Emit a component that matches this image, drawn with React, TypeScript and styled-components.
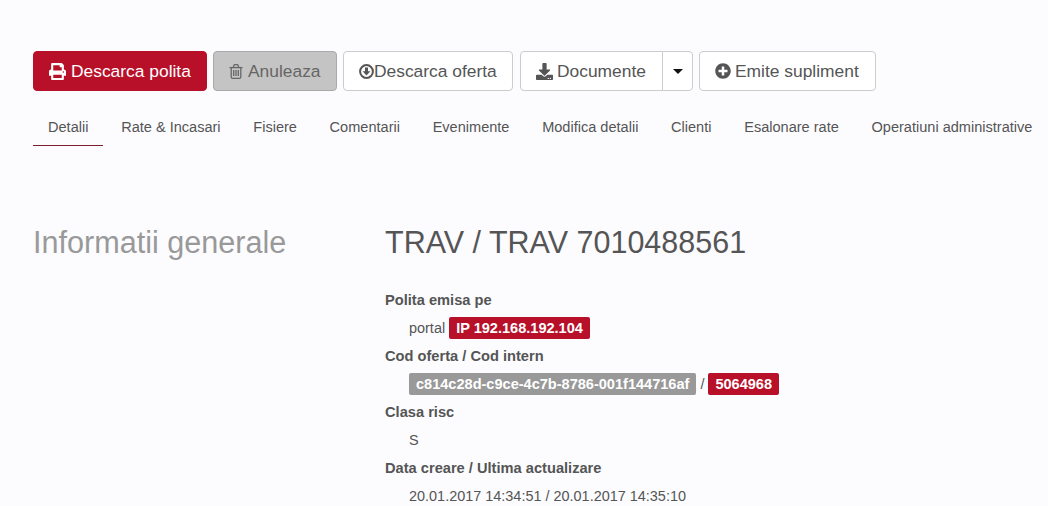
import React from "react";
import styled, { createGlobalStyle } from "styled-components";
import { FaPrint, FaDownload, FaPlusCircle } from "react-icons/fa";

const Global = createGlobalStyle`
  html, body { margin: 0; padding: 0; height: 100%; overflow: hidden; background: #fcfcff; }
  body { font-family: "Liberation Sans", Arial, sans-serif; color: #555; font-size: 14.45px; }
  * { box-sizing: border-box; }
`;

const Page = styled.div`
  padding: 51px 0 0 33px;
  height: 506px;
  overflow: hidden;
`;

const Toolbar = styled.div`
  display: flex;
  gap: 6px;
  height: 40px;
`;

const Button = styled.button<{ $variant?: "primary" | "disabled"; $width: number; $gap?: number }>`
  display: inline-flex;
  align-items: center;
  justify-content: flex-start;
  gap: ${(p) => p.$gap ?? 5}px;
  width: ${(p) => p.$width}px;
  height: 40px;
  padding: 0 0 0 15px;
  font: 17.4px "Liberation Sans", Arial, sans-serif;
  white-space: nowrap;
  border-radius: 4px;
  border: 1px solid
    ${(p) => (p.$variant === "primary" ? "#b81029" : p.$variant === "disabled" ? "#a9a9a9" : "#ccc")};
  background: ${(p) => (p.$variant === "primary" ? "#b81029" : p.$variant === "disabled" ? "#c4c4c4" : "#fff")};
  color: ${(p) => (p.$variant === "primary" ? "#fff" : p.$variant === "disabled" ? "#666" : "#555")};
`;

const SplitGroup = styled.div`
  display: flex;
  margin-left: 1px;
`;

const SplitMain = styled(Button)`
  border-radius: 4px 0 0 4px;
`;

const SplitCaret = styled.button`
  display: inline-flex;
  align-items: center;
  justify-content: center;
  width: 31px;
  height: 40px;
  padding: 0;
  margin-left: -1px;
  background: #fff;
  border: 1px solid #ccc;
  border-radius: 0 4px 4px 0;
  &::after {
    content: "";
    border-top: 5px solid #111;
    border-left: 5px solid transparent;
    border-right: 5px solid transparent;
  }
`;

const Tabs = styled.nav`
  display: flex;
  gap: 2.7px;
  margin-top: 14px;
  height: 41px;
`;

const Tab = styled.a<{ $active?: boolean }>`
  padding: 0 15px;
  height: 41px;
  line-height: 44px;
  font-size: 14.55px;
  color: #555;
  white-space: nowrap;
  border-bottom: 1px solid ${(p) => (p.$active ? "#7a1f2b" : "transparent")};
`;

const Section = styled.section`
  display: grid;
  grid-template-columns: 352px 1fr;
  margin-top: 78px;
`;

const SectionTitle = styled.h2`
  margin: 0;
  font-size: 30.6px;
  font-weight: 400;
  line-height: 36px;
  color: #999;
`;

const PolicyTitle = styled.h1`
  margin: 0 0 26px;
  font-size: 30.5px;
  font-weight: 400;
  line-height: 36px;
  color: #555;
`;

const Details = styled.dl`
  margin: 0;
`;

const Term = styled.dt`
  font-size: 14.65px;
  font-weight: 700;
  line-height: 28px;
  height: 28px;
`;

const Value = styled.dd`
  margin: 0 0 0 24px;
  line-height: 28px;
  height: 28px;
  white-space: nowrap;
`;

const Badge = styled.span<{ $tone: "red" | "gray" }>`
  display: inline-block;
  padding: 0 7px;
  height: 22px;
  font-size: 14.55px;
  line-height: 22px;
  border-radius: 2px;
  font-weight: 700;
  color: #fff;
  vertical-align: middle;
  margin-top: -3px;
  background: ${(p) => (p.$tone === "red" ? "#b81029" : "#999")};
`;

const TrashIcon = () => (
  <svg width="14" height="15" viewBox="0 0 14 15" fill="none" stroke="currentColor" strokeWidth="1.3">
    <path d="M.5 3.6h13" />
    <path d="M4.3 3.4 5 1.2q.2-.5.7-.5h2.6q.5 0 .7.5l.7 2.2" />
    <path d="M2.2 3.6v9.4q0 1.3 1.2 1.3h7.2q1.2 0 1.2-1.3V3.6" />
    <path d="M4.7 6v6M7 6v6M9.3 6v6" />
  </svg>
);

const CircleDownIcon = () => (
  <svg width="15" height="15" viewBox="0 0 15 15" fill="currentColor">
    <circle cx="7.5" cy="7.5" r="6.4" fill="none" stroke="currentColor" strokeWidth="2" />
    <path d="M6 3.6h3v3.7h2.4L7.5 11.4 3.6 7.3H6z" />
  </svg>
);

export default function App() {
  return (
    <>
      <Global />
      <Page>
        <Toolbar>
          <Button $variant="primary" $width={174}><FaPrint size={17} /> Descarca polita</Button>
          <Button $variant="disabled" $width={124}><TrashIcon /> Anuleaza</Button>
          <Button $width={170} $gap={0}><CircleDownIcon /> Descarca oferta</Button>
          <SplitGroup>
            <SplitMain $width={143} $gap={4}><FaDownload size={17} /> Documente</SplitMain>
            <SplitCaret aria-label="Mai multe" />
          </SplitGroup>
          <Button $width={177} $gap={4}><FaPlusCircle size={16} /> Emite supliment</Button>
        </Toolbar>
        <Tabs>
          <Tab $active>Detalii</Tab>
          <Tab>Rate &amp; Incasari</Tab>
          <Tab>Fisiere</Tab>
          <Tab>Comentarii</Tab>
          <Tab>Evenimente</Tab>
          <Tab>Modifica detalii</Tab>
          <Tab>Clienti</Tab>
          <Tab>Esalonare rate</Tab>
          <Tab>Operatiuni administrative</Tab>
        </Tabs>
        <Section>
          <SectionTitle>Informatii generale</SectionTitle>
          <div>
            <PolicyTitle>TRAV / TRAV 7010488561</PolicyTitle>
            <Details>
              <Term>Polita emisa pe</Term>
              <Value>portal <Badge $tone="red">IP 192.168.192.104</Badge></Value>
              <Term>Cod oferta / Cod intern</Term>
              <Value><Badge $tone="gray">c814c28d-c9ce-4c7b-8786-001f144716af</Badge> / <Badge $tone="red">5064968</Badge></Value>
              <Term>Clasa risc</Term>
              <Value>S</Value>
              <Term>Data creare / Ultima actualizare</Term>
              <Value>20.01.2017 14:34:51 / 20.01.2017 14:35:10</Value>
            </Details>
          </div>
        </Section>
      </Page>
    </>
  );
}
